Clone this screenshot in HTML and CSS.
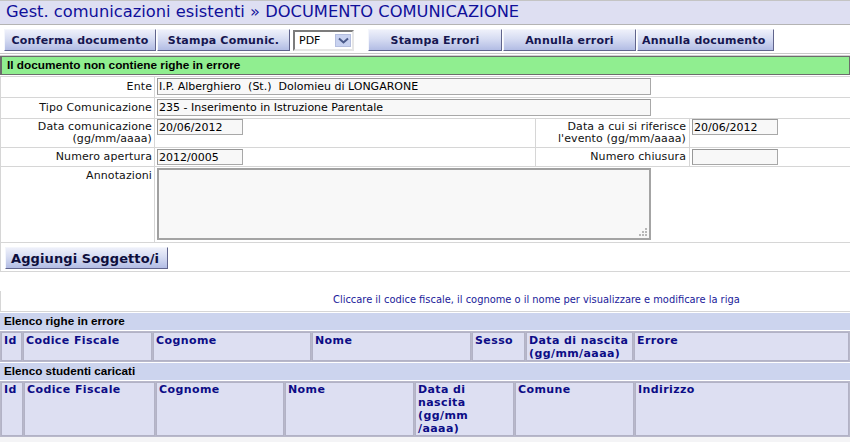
FILE: index.html
```html
<!DOCTYPE html>
<html lang="it">
<head>
<meta charset="utf-8">
<title>DOCUMENTO COMUNICAZIONE</title>
<link rel="stylesheet" href="styles.css">
</head>
<body>
<div class="title">Gest. comunicazioni esistenti » DOCUMENTO COMUNICAZIONE</div>
<div class="toolbar">
  <button class="btn b-conf">Conferma documento</button>
  <button class="btn b-stampa">Stampa Comunic.</button>
  <div class="select"><span class="sel-text">PDF</span><span class="sel-arrow"><svg width="11" height="7" viewBox="0 0 11 7"><path d="M1 1.5 L5.5 5.5 L10 1.5" fill="none" stroke="#4a5a8a" stroke-width="2"/></svg></span></div>
  <button class="btn b-err">Stampa Errori</button>
  <button class="btn b-annerr">Annulla errori</button>
  <button class="btn b-anndoc">Annulla documento</button>
</div>
<div class="status">Il documento non contiene righe in errore</div>
<div class="form">
  <div class="frow h20">
    <div class="lbl">Ente</div>
    <div class="val grow"><input class="inp wide" type="text" value="I.P. Alberghiero  (St.)  Dolomieu di LONGARONE" readonly></div>
  </div>
  <div class="frow h20">
    <div class="lbl">Tipo Comunicazione</div>
    <div class="val grow"><input class="inp wide" type="text" value="235 - Inserimento in Istruzione Parentale" readonly></div>
  </div>
  <div class="frow h28">
    <div class="lbl">Data comunicazione<br>(gg/mm/aaaa)</div>
    <div class="val mid tight"><input class="inp small" type="text" value="20/06/2012" readonly></div>
    <div class="lbl lbl2">Data a cui si riferisce<br>l'evento (gg/mm/aaaa)</div>
    <div class="val grow tight"><input class="inp small" type="text" value="20/06/2012" readonly></div>
  </div>
  <div class="frow h18">
    <div class="lbl">Numero apertura</div>
    <div class="val mid"><input class="inp small" type="text" value="2012/0005" readonly></div>
    <div class="lbl lbl2">Numero chiusura</div>
    <div class="val grow"><input class="inp small" type="text" value="" readonly></div>
  </div>
  <div class="frow h75">
    <div class="lbl top">Annotazioni</div>
    <div class="val grow ta"><div class="ta-wrap"><textarea class="note"></textarea><svg class="grip" width="8" height="8" viewBox="0 0 8 8"><rect x="6" y="0" width="2" height="2" fill="#b8b8b8"/><rect x="3" y="3" width="2" height="2" fill="#b8b8b8"/><rect x="6" y="3" width="2" height="2" fill="#b8b8b8"/><rect x="0" y="6" width="2" height="2" fill="#b8b8b8"/><rect x="3" y="6" width="2" height="2" fill="#b8b8b8"/><rect x="6" y="6" width="2" height="2" fill="#b8b8b8"/></svg></div></div>
  </div>
  <div class="frow h28 addrow">
    <button class="btn b-add">Aggiungi Soggetto/i</button>
  </div>
</div>
<div class="hint">Cliccare il codice fiscale, il cognome o il nome per visualizzare e modificare la riga</div>
<div class="bar">Elenco righe in errore</div>
<table class="grid g1">
  <colgroup><col class="c-id1"><col class="c-cf1"><col class="c-cog1"><col class="c-nom1"><col class="c-ses1"><col class="c-dat1"><col></colgroup>
  <tr><th>Id</th><th>Codice Fiscale</th><th>Cognome</th><th>Nome</th><th>Sesso</th><th>Data di nascita<br>(gg/mm/aaaa)</th><th>Errore</th></tr>
</table>
<div class="bar">Elenco studenti caricati</div>
<table class="grid g2">
  <colgroup><col class="c-id2"><col class="c-cf2"><col class="c-cog2"><col class="c-nom2"><col class="c-dat2"><col class="c-com2"><col></colgroup>
  <tr><th>Id</th><th>Codice Fiscale</th><th>Cognome</th><th>Nome</th><th>Data di<br>nascita<br>(gg/mm<br>/aaaa)</th><th>Comune</th><th>Indirizzo</th></tr>
</table>
<div class="foot"></div>
</body>
</html>
```

FILE: styles.css
```css
* { box-sizing: border-box; }
html, body { margin: 0; padding: 0; background: #ffffff; }
body {
  width: 850px;
  font-family: "DejaVu Sans", Verdana, sans-serif;
  font-size: 11px;
  color: #000;
}

.title {
  height: 25px;
  border-top: 1px solid #c4c4c4;
  border-bottom: 1px solid #b4b4b4;
  background: #dedff2;
  color: #10109a;
  font-size: 16.3px;
  line-height: 22px;
  padding-left: 6px;
  white-space: nowrap;
}

.toolbar {
  display: flex;
  align-items: flex-start;
  height: 29px;
  padding: 4px 0 0 4px;
  border-bottom: 1px solid #c8c8c8;
}

.btn {
  height: 22px;
  margin: 0;
  padding: 0;
  border: 1px solid;
  border-color: #f4f6fc #60648c #60648c #f4f6fc;
  background: linear-gradient(#eef0fa, #d6dcf2 45%, #b2bce4);
  color: #161650;
  font-family: "DejaVu Sans", Verdana, sans-serif;
  font-weight: bold;
  font-size: 11px;
  letter-spacing: 0.2px;
  white-space: nowrap;
  text-align: center;
}
.b-conf { width: 152px; }
.b-stampa { width: 133px; margin-left: 1px; }
.b-err { width: 134px; margin-left: 14px; }
.b-annerr { width: 133px; margin-left: 1px; }
.b-anndoc { width: 137px; margin-left: 1px; text-align: left; padding-left: 4px; }

.select {
  width: 61px;
  height: 21px;
  margin: 1px 0 0 3px;
  display: flex;
  align-items: center;
  justify-content: space-between;
  border: 2px solid;
  border-color: #7c7c7c #e6e6e6 #e6e6e6 #7c7c7c;
  background: #fff;
  padding: 0 1px 0 4px;
}
.sel-text { font-size: 11px; }
.sel-arrow {
  width: 16px;
  height: 13px;
  display: flex;
  align-items: center;
  justify-content: center;
  background: #c8d2f0;
  border: 1px solid #b4bedf;
}

.status {
  margin-top: 2px;
  height: 19px;
  border: 1px solid #6c6c6c;
  border-left-width: 2px;
  background: #90ee90;
  font-family: "Liberation Sans", Arial, sans-serif;
  font-weight: bold;
  font-size: 11.8px;
  line-height: 17px;
  padding-left: 5px;
  box-shadow: 0 -1px 0 #d0d0d0;
}

.form {
  margin-top: 1px;
  border-top: 1px solid #d6d6d6;
  border-left: 1px solid #d6d6d6;
}
.frow {
  display: flex;
  border-bottom: 1px solid #d6d6d6;
}
.h20 { height: 21px; }
.h28 { height: 29px; }
.h18 { height: 19px; }
.h75 { height: 76px; }

.lbl {
  width: 154px;
  flex: none;
  border-right: 1px solid #d6d6d6;
  text-align: right;
  padding-right: 2px;
  display: flex;
  flex-direction: column;
  justify-content: center;
  align-items: flex-end;
  line-height: 12px;
  letter-spacing: 0.1px;
  color: #111;
}
.lbl.top { justify-content: flex-start; padding-top: 3px; }
.lbl2 { width: 154px; padding-right: 3px; }
.val { padding: 1px 0 0 2px; }
.val.tight { padding-top: 0; }
.val.mid { width: 381px; flex: none; border-right: 1px solid #d6d6d6; }
.val.grow { flex: 1; }

.inp {
  display: block;
  height: 17px;
  border: 1px solid #a8a8a8;
  border-top-color: #989898;
  border-left-color: #989898;
  background: #f8f8f8;
  font-family: "DejaVu Sans", Verdana, sans-serif;
  font-size: 11px;
  color: #000;
  padding: 0 1px;
  margin: 0;
  outline: none;
  white-space: pre;
}
.inp.wide { width: 494px; }
.inp.small { width: 86px; height: 16px; }

.val.ta { padding-top: 1px; }
.ta-wrap { position: relative; width: 494px; height: 72px; }
.note {
  display: block;
  width: 494px;
  height: 72px;
  margin: 0;
  border: 2px solid;
  border-color: #a0a0a0 #a4a4a4 #a4a4a4 #a0a0a0;
  background: #f8f8f8;
  resize: none;
  outline: none;
}
.grip { position: absolute; right: 4px; bottom: 4px; }

.addrow { padding: 4px 0 0 4px; }
.b-add {
  width: 163px;
  font-size: 13px;
  letter-spacing: 0.1px;
  text-align: left;
  padding-left: 5px;
  color: #0e0e3c;
}

.hint {
  margin-top: 19px;
  height: 21px;
  border-left: 1px solid #d6d6d6;
  border-bottom: 1px solid #d6d6d6;
  color: #1a1a9a;
  font-size: 9.9px;
  line-height: 14px;
  padding: 2px 0 0 332px;
  white-space: nowrap;
}

.bar {
  margin-top: 1px;
  height: 17px;
  background: #ccd4ee;
  font-family: "Liberation Sans", Arial, sans-serif;
  font-weight: bold;
  font-size: 11.7px;
  line-height: 16px;
  padding-left: 4px;
  color: #000;
}

.grid {
  width: 850px;
  margin-top: 1px;
  table-layout: fixed;
  border-collapse: separate;
  border-spacing: 1px;
  background: #b8b8ca;
}
.grid th {
  background: #dddff2;
  border: 1px solid #b2b2c6;
  color: #0c0c86;
  font-weight: bold;
  font-size: 11px;
  letter-spacing: 0.4px;
  line-height: 13px;
  text-align: left;
  vertical-align: top;
  padding: 1px 1px 0 2px;
  white-space: nowrap;
  overflow: hidden;
}
.g1 th { height: 27px; }
.g2 th { height: 54px; padding-top: 0; }

.c-id1 { width: 21px; }
.c-cf1 { width: 129px; }
.c-cog1 { width: 158px; }
.c-nom1 { width: 159px; }
.c-ses1 { width: 53px; }
.c-dat1 { width: 107px; }

.c-id2 { width: 22px; }
.c-cf2 { width: 131px; }
.c-cog2 { width: 128px; }
.c-nom2 { width: 129px; }
.c-dat2 { width: 99px; }
.c-com2 { width: 119px; }

.foot { height: 10px; background: #f4f4f6; }
```
